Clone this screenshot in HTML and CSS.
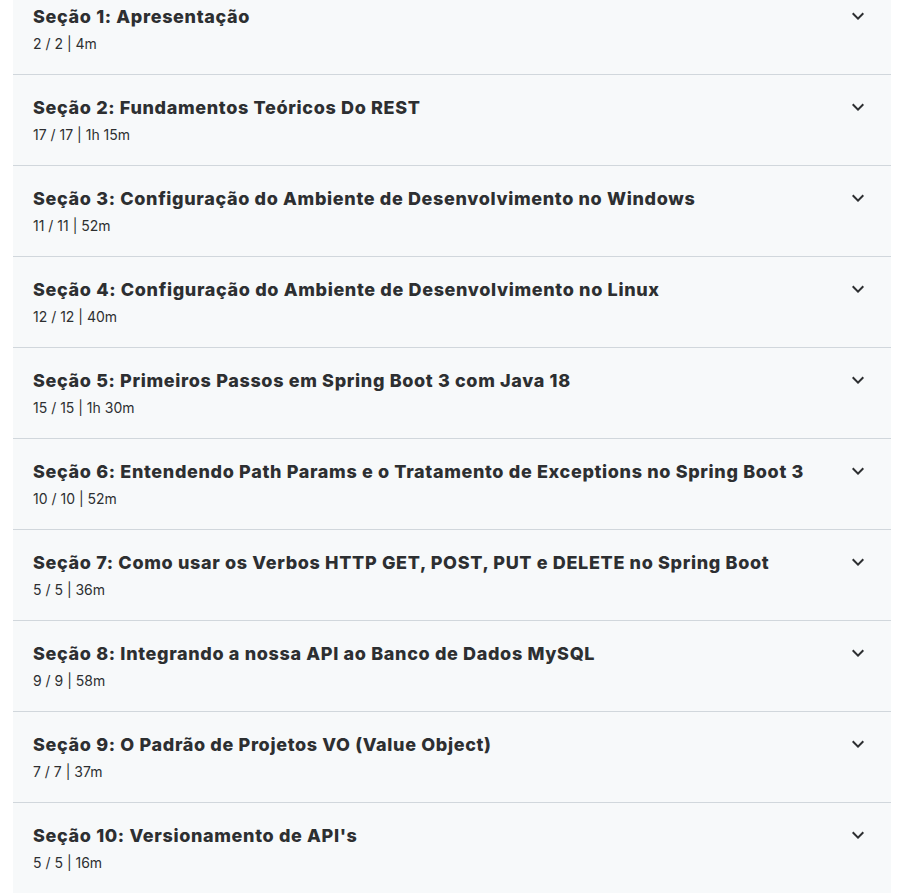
FILE: index.html
```html
<!DOCTYPE html>
<html lang="pt-BR">
<head>
<meta charset="utf-8">
<title>Conteúdo do curso</title>
<link rel="stylesheet" href="styles.css">
</head>
<body>
<div class="curriculum">
  <div class="section">
    <div class="info">
      <div class="title">Seção 1: Apresentação</div>
      <div class="meta">2 / 2 | 4m</div>
    </div>
    <svg class="chev" viewBox="0 0 24 24"><path d="M16.59 8.59L12 13.17 7.41 8.59 6 10l6 6 6-6z"/></svg>
  </div>
  <div class="section">
    <div class="info">
      <div class="title">Seção 2: Fundamentos Teóricos Do REST</div>
      <div class="meta">17 / 17 | 1h 15m</div>
    </div>
    <svg class="chev" viewBox="0 0 24 24"><path d="M16.59 8.59L12 13.17 7.41 8.59 6 10l6 6 6-6z"/></svg>
  </div>
  <div class="section">
    <div class="info">
      <div class="title">Seção 3: Configuração do Ambiente de Desenvolvimento no Windows</div>
      <div class="meta">11 / 11 | 52m</div>
    </div>
    <svg class="chev" viewBox="0 0 24 24"><path d="M16.59 8.59L12 13.17 7.41 8.59 6 10l6 6 6-6z"/></svg>
  </div>
  <div class="section">
    <div class="info">
      <div class="title">Seção 4: Configuração do Ambiente de Desenvolvimento no Linux</div>
      <div class="meta">12 / 12 | 40m</div>
    </div>
    <svg class="chev" viewBox="0 0 24 24"><path d="M16.59 8.59L12 13.17 7.41 8.59 6 10l6 6 6-6z"/></svg>
  </div>
  <div class="section">
    <div class="info">
      <div class="title">Seção 5: Primeiros Passos em Spring Boot 3 com Java 18</div>
      <div class="meta">15 / 15 | 1h 30m</div>
    </div>
    <svg class="chev" viewBox="0 0 24 24"><path d="M16.59 8.59L12 13.17 7.41 8.59 6 10l6 6 6-6z"/></svg>
  </div>
  <div class="section">
    <div class="info">
      <div class="title">Seção 6: Entendendo Path Params e o Tratamento de Exceptions no Spring Boot 3</div>
      <div class="meta">10 / 10 | 52m</div>
    </div>
    <svg class="chev" viewBox="0 0 24 24"><path d="M16.59 8.59L12 13.17 7.41 8.59 6 10l6 6 6-6z"/></svg>
  </div>
  <div class="section">
    <div class="info">
      <div class="title">Seção 7: Como usar os Verbos HTTP GET, POST, PUT e DELETE no Spring Boot</div>
      <div class="meta">5 / 5 | 36m</div>
    </div>
    <svg class="chev" viewBox="0 0 24 24"><path d="M16.59 8.59L12 13.17 7.41 8.59 6 10l6 6 6-6z"/></svg>
  </div>
  <div class="section">
    <div class="info">
      <div class="title">Seção 8: Integrando a nossa API ao Banco de Dados MySQL</div>
      <div class="meta">9 / 9 | 58m</div>
    </div>
    <svg class="chev" viewBox="0 0 24 24"><path d="M16.59 8.59L12 13.17 7.41 8.59 6 10l6 6 6-6z"/></svg>
  </div>
  <div class="section">
    <div class="info">
      <div class="title">Seção 9: O Padrão de Projetos VO (Value Object)</div>
      <div class="meta">7 / 7 | 37m</div>
    </div>
    <svg class="chev" viewBox="0 0 24 24"><path d="M16.59 8.59L12 13.17 7.41 8.59 6 10l6 6 6-6z"/></svg>
  </div>
  <div class="section">
    <div class="info">
      <div class="title">Seção 10: Versionamento de API's</div>
      <div class="meta">5 / 5 | 16m</div>
    </div>
    <svg class="chev" viewBox="0 0 24 24"><path d="M16.59 8.59L12 13.17 7.41 8.59 6 10l6 6 6-6z"/></svg>
  </div>
</div>
</body>
</html>
```
FILE: styles.css
```css
html, body {
  margin: 0;
  padding: 0;
  background: #ffffff;
}
body {
  font-family: Inter, "Noto Sans", sans-serif;
  color: #2d2f31;
  overflow: hidden;
}
.curriculum {
  margin: -16px 19px 0 13px;
  background: #f7f9fa;
}
.section {
  display: flex;
  align-items: flex-start;
  padding: 20px 20px 20px 20px;
  border-bottom: 1px solid #d1d7dc;
}
.info {
  flex: 1;
  display: flex;
  flex-direction: column;
  gap: 5px;
}
.title {
  font-size: 18px;
  font-weight: 800;
  line-height: 25px;
  letter-spacing: 0.65px;
}
.meta {
  font-size: 14px;
  line-height: 20px;
}
.chev {
  width: 24px;
  height: 24px;
  fill: #2d2f31;
  flex: none;
  margin-right: 1px;
}
```
